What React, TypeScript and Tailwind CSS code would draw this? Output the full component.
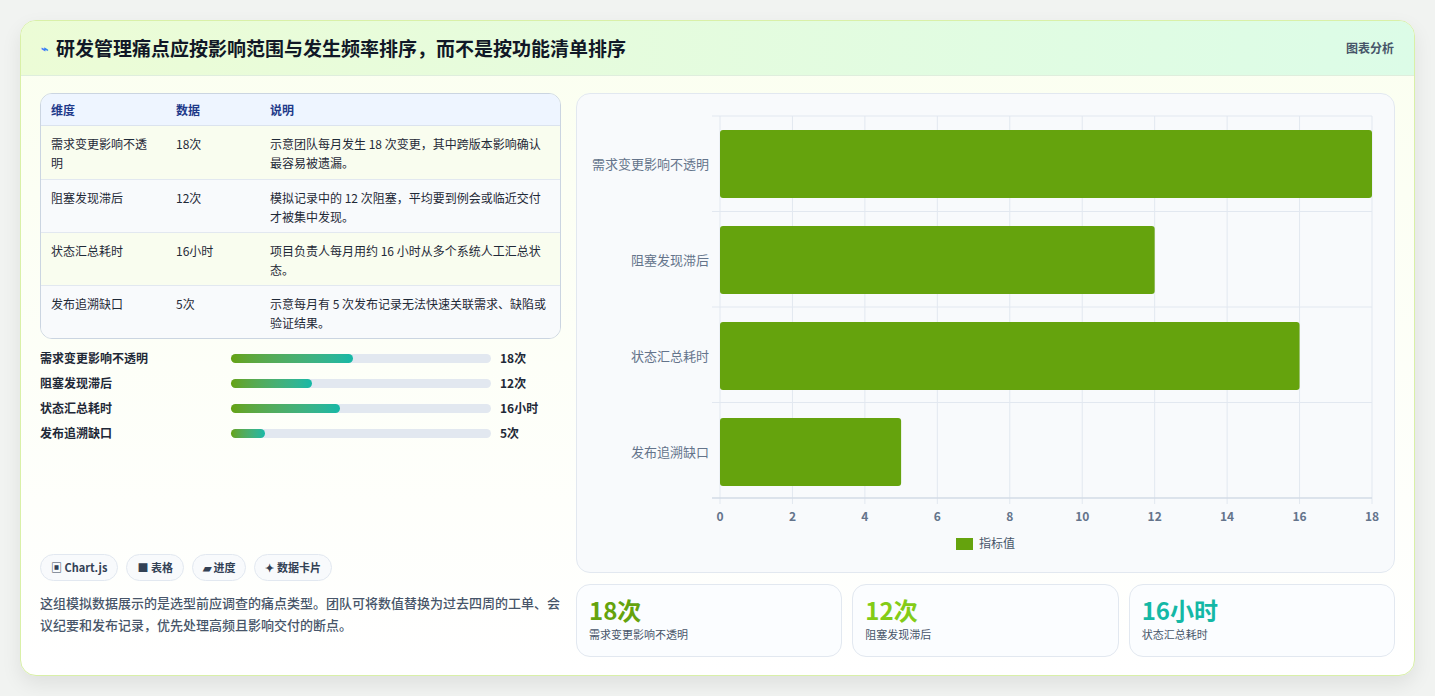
const font = { fontFamily: '"Noto Sans CJK SC", "Noto Sans", sans-serif' };

const rows = [
  { name: "需求变更影响不透明", value: "18次", n: 18, note: "示意团队每月发生 18 次变更，其中跨版本影响确认最容易被遗漏。" },
  { name: "阻塞发现滞后", value: "12次", n: 12, note: "模拟记录中的 12 次阻塞，平均要到例会或临近交付才被集中发现。" },
  { name: "状态汇总耗时", value: "16小时", n: 16, note: "项目负责人每月用约 16 小时从多个系统人工汇总状态。" },
  { name: "发布追溯缺口", value: "5次", n: 5, note: "示意每月有 5 次发布记录无法快速关联需求、缺陷或验证结果。" },
];

function Chart() {
  const left = 143, right = 795, top = 22, bottom = 404;
  const step = (right - left) / 18;
  return (
    <svg width="817" height="479" className="block">
      {Array.from({ length: 10 }).map((_, i) => {
        const x = left + i * 2 * step;
        return <line key={i} x1={x} x2={x} y1={top} y2={bottom + 6} stroke="#e2e8f0" />;
      })}
      {[0, 1, 2, 3, 4].map((i) => (
        <line key={i} x1={left - 8} x2={right} y1={top + i * 95.5} y2={top + i * 95.5} stroke="#e2e8f0" />
      ))}
      <line x1={left - 8} x2={right} y1={bottom} y2={bottom} stroke="#cbd5e1" />
      {rows.map((r, i) => {
        const y = 36 + i * 96;
        return (
          <g key={r.name}>
            <rect x={left} y={y} width={r.n * step} height={68} rx={3} fill="#65a30d" />
            <text x={132} y={y + 39} textAnchor="end" fontSize="13" fill="#64748b" style={font}>{r.name}</text>
          </g>
        );
      })}
      {Array.from({ length: 10 }).map((_, i) => (
        <text key={i} x={left + i * 2 * step} y={427} textAnchor="middle" fontSize="12" fontWeight="600" fill="#64748b" style={font}>{i * 2}</text>
      ))}
      <rect x={379} y={444} width={17} height={12} fill="#65a30d" />
      <text x={402} y={454} fontSize="12" fill="#475569" style={font}>指标值</text>
    </svg>
  );
}

export default function App() {
  return (
    <div className="min-h-[696px] w-full bg-[#f1f3f1] px-[20px] pt-[20px]" style={font}>
      <div className="h-[656px] rounded-[16px] border border-[#d9f0a8] bg-gradient-to-b from-[#fbfff0] to-white shadow-[0_8px_20px_rgba(0,0,0,0.08)] overflow-hidden">
        <div className="flex h-[55px] items-center justify-between border-b border-[#dfeedd] bg-gradient-to-r from-[#ecfcd6] to-[#dcfce7] px-[20px]">
          <div className="flex items-center gap-[8px] text-[19px] font-bold text-[#111827]">
            <span className="text-[12px] text-[#3b82f6]">⌁</span>
            研发管理痛点应按影响范围与发生频率排序，而不是按功能清单排序
          </div>
          <span className="text-[12px] font-semibold text-[#475569]">图表分析</span>
        </div>
        <div className="flex gap-[15px] px-[19px] pt-[17px]">
          <div className="flex w-[524px] flex-col h-[563px]">
            <div className="overflow-hidden rounded-[12px] border border-[#cbd5e1]">
              <div className="grid h-[32px] grid-cols-[125px_94px_1fr] items-center border-b border-[#dbe3ee] bg-[#eef5ff] px-[10px] text-[12px] font-semibold text-[#1e3a8a]">
                <span>维度</span><span>数据</span><span>说明</span>
              </div>
              {rows.map((r, i) => (
                <div key={r.name} className={`grid h-[53px] grid-cols-[125px_94px_1fr] items-start border-[#e2e8f0] px-[10px] pt-[8px] text-[12px] leading-[19px] text-[#1f2937] ${i > 0 ? "border-t" : ""} ${i % 2 === 0 ? "bg-[#f9fdef]" : "bg-[#f8fafc]"}`}>
                  <span className="pr-[20px]">{r.name}</span>
                  <span>{r.value}</span>
                  <span>{r.note}</span>
                </div>
              ))}
            </div>
            <div className="mt-[12px] flex flex-col gap-[11px]">
              {rows.map((r) => (
                <div key={r.name} className="flex h-[14px] items-center text-[12px] font-semibold text-[#1f2937]">
                  <span className="w-[191px]">{r.name}</span>
                  <div className="h-[9px] w-[260px] rounded-full bg-[#e2e8f0]">
                    <div className="h-full rounded-full bg-gradient-to-r from-[#65a30d] to-[#14b8a6]" style={{ width: `${(r.n / 18) * 47}%` }} />
                  </div>
                  <span className="ml-[9px]">{r.value}</span>
                </div>
              ))}
            </div>
            <div className="mt-auto flex gap-[8px] text-[11px] font-semibold text-[#334155]">
              {["▣ Chart.js", "■ 表格", "▰ 进度", "✦ 数据卡片"].map((c) => (
                <span key={c} className="flex h-[27px] items-center rounded-full border border-[#e2e8f0] bg-[#f8fafc] px-[10px]">{c}</span>
              ))}
            </div>
            <p className="mt-[11px] mb-[20px] text-[13px] leading-[22px] font-medium text-[#475569]">这组模拟数据展示的是选型前应调查的痛点类型。团队可将数值替换为过去四周的工单、会议纪要和发布记录，优先处理高频且影响交付的断点。</p>
          </div>
          <div className="flex flex-1 flex-col gap-[11px]">
            <div className="h-[480px] rounded-[14px] border border-[#e2e8f0] bg-[#f8fafc]">
              <Chart />
            </div>
            <div className="grid grid-cols-3 gap-[10px]">
              {[
                { v: "18次", l: "需求变更影响不透明", c: "text-[#65a30d]" },
                { v: "12次", l: "阻塞发现滞后", c: "text-[#84cc16]" },
                { v: "16小时", l: "状态汇总耗时", c: "text-[#14b8a6]" },
              ].map((s) => (
                <div key={s.l} className="h-[73px] rounded-[14px] border border-[#e2e8f0] bg-[#fbfdff] px-[12px] pt-[9px]">
                  <div className={`text-[24px] font-bold leading-[32px] ${s.c}`}>{s.v}</div>
                  <div className="text-[11px] text-[#475569]">{s.l}</div>
                </div>
              ))}
            </div>
          </div>
        </div>
      </div>
    </div>
  );
}
